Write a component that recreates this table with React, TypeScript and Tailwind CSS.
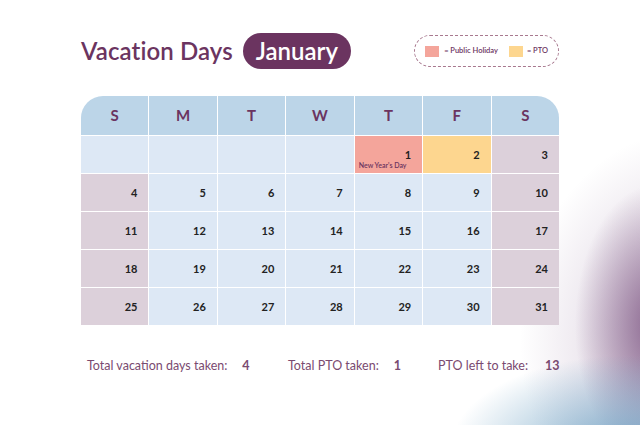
import React from "react";

type Cell = { day?: number; kind: "empty" | "work" | "weekend" | "holiday" | "pto"; note?: string };

const headers = ["S", "M", "T", "W", "T", "F", "S"];

function buildCells(): Cell[] {
  const cells: Cell[] = [];
  for (let i = 0; i < 4; i++) cells.push({ kind: "empty" });
  for (let d = 1; d <= 31; d++) {
    const col = (d + 3) % 7;
    let kind: Cell["kind"] = col === 0 || col === 6 ? "weekend" : "work";
    if (d === 1) kind = "holiday";
    if (d === 2) kind = "pto";
    cells.push({ day: d, kind, note: d === 1 ? "New Year's Day" : undefined });
  }
  return cells;
}

const bgFor: Record<Cell["kind"], string> = {
  empty: "bg-[#dde8f5]",
  work: "bg-[#dde8f5]",
  weekend: "bg-[#dcd0da]",
  holiday: "bg-[#f4a59b]",
  pto: "bg-[#fdd68f]",
};

export default function App() {
  const cells = buildCells();

  return (
    <div className="relative w-[640px] h-[425px] overflow-hidden bg-white font-['Lato',sans-serif] bg-[radial-gradient(ellipse_180px_95px_at_630px_450px,rgba(115,165,198,0.95),rgba(115,165,198,0)),radial-gradient(ellipse_80px_140px_at_655px_325px,rgba(125,85,130,0.85),rgba(125,85,130,0)),radial-gradient(ellipse_170px_210px_at_690px_340px,rgba(150,120,160,0.45),rgba(150,120,160,0))]">
      <div className="flex items-center justify-between pl-[81px] pr-[81px] pt-[33px]">
        <div className="flex items-center gap-[10px]">
          <h1 className="text-[24px] leading-none font-semibold text-[#6b3460] tracking-[0.1px]">Vacation Days</h1>
          <span className="rounded-full bg-[#6b3460] px-[13px] h-[36px] flex items-center text-[24px] leading-none font-semibold text-white">
            January
          </span>
        </div>
        <div className="flex items-center h-[32px] px-[10px] rounded-[16px] border border-dashed border-[#a8798f]">
          <div className="flex items-center gap-[5px]">
            <span className="w-[14px] h-[11px] bg-[#f4a59b]" />
            <span className="text-[7.5px] text-[#6b3460] font-semibold">= Public Holiday</span>
          </div>
          <div className="flex items-center gap-[4px] ml-[11px]">
            <span className="w-[14px] h-[11px] bg-[#fdd68f]" />
            <span className="text-[7.5px] text-[#6b3460] font-semibold">= PTO</span>
          </div>
        </div>
      </div>

      <div className="mx-[81px] mt-[27px] w-[478px] grid grid-cols-7 gap-px rounded-t-[22px] overflow-hidden">
        {headers.map((h, i) => (
          <div key={i} className="h-[39px] bg-[#bcd5e8] flex items-center justify-center text-[15px] font-bold text-[#6b3460]">
            {h}
          </div>
        ))}
        {cells.map((c, i) => (
          <div key={i} className={`relative h-[37px] ${bgFor[c.kind]}`}>
            {c.day && (
              <span className="absolute right-[11px] top-[11px] text-[11px] font-bold text-[#222]">{c.day}</span>
            )}
            {c.note && (
              <span className="absolute left-[4px] top-[24px] text-[7px] font-semibold text-[#6b3460] whitespace-nowrap">{c.note}</span>
            )}
          </div>
        ))}
      </div>

      <div className="flex items-center pl-[87px] mt-[32px] text-[12.5px] text-[#7a4a70]">
        <div className="w-[201px] flex items-center gap-[15px]">
          <span>Total vacation days taken:</span>
          <span className="font-bold">4</span>
        </div>
        <div className="w-[150px] flex items-center gap-[15px]">
          <span>Total PTO taken:</span>
          <span className="font-bold">1</span>
        </div>
        <div className="flex items-center gap-[17px]">
          <span>PTO left to take:</span>
          <span className="font-bold">13</span>
        </div>
      </div>
    </div>
  );
}
